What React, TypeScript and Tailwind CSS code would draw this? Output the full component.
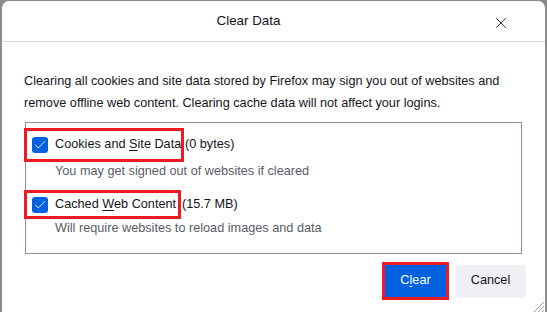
import { Check, X } from "lucide-react";

const font = { fontFamily: '"Segoe UI", "Liberation Sans", Arial, sans-serif' };

function Checkbox() {
  return (
    <span className="w-4 h-4 rounded-[3px] bg-[#0061e0] flex items-center justify-center shrink-0">
      <Check size={14} strokeWidth={1.5} className="text-white" />
    </span>
  );
}

function Option({
  before,
  access,
  after,
  size,
  hint,
  boxClass,
}: {
  before: string;
  access: string;
  after: string;
  size: string;
  hint: string;
  boxClass: string;
}) {
  return (
    <div>
      <div className="flex items-center">
        {/* red annotation box round the checkbox + label */}
        <div className={"-ml-[2px] border-[3px] border-[#ed1c24] flex items-center pl-[5px] " + boxClass}>
          <Checkbox />
          <span className="ml-[7px] text-[#15141a] whitespace-nowrap">
            {before}
            <span className="underline underline-offset-2">{access}</span>
            {after}
          </span>
        </div>
        <span className="ml-[1px] text-[#15141a] whitespace-nowrap">{size}</span>
      </div>
      <div className="pl-[29px] text-[#5b5b66] leading-[18px] whitespace-nowrap">{hint}</div>
    </div>
  );
}

export default function App() {
  return (
    <div className="w-[547px] h-[312px] bg-[#8c8c8c] overflow-hidden" style={font}>
      <div className="h-full mt-px ml-[2px] mr-[2px] bg-white rounded-t-[7px] flex flex-col relative text-[12.7px]">
        {/* header */}
        <div className="h-[41px] border-b border-[#d7d7db] flex items-center justify-center pr-[50px] relative shrink-0">
          <span className="text-[13.4px] text-[#15141a]">Clear Data</span>
          <button className="absolute right-[35px] top-[13px] text-[#15141a]">
            <X size={18} strokeWidth={1.2} />
          </button>
        </div>

        {/* body */}
        <div className="flex-1 flex flex-col pl-[22px] pr-[19px]">
          <p className="mt-[28px] leading-[22px] text-[#15141a]">
            Clearing all cookies and site data stored by Firefox may sign you out of websites and remove
            offline web content. Clearing cache data will not affect your logins.
          </p>

          <div className="mt-[8px] ml-[1px] w-[497px] h-[132px] border border-[#8f8f9d] pt-[5px]">
            <Option
              before="Cookies and "
              access="S"
              after="ite Data"
              size="(0 bytes)"
              hint="You may get signed out of websites if cleared"
              boxClass="h-[34px] w-[160px]"
            />
            <div className="mt-[10px]">
              <Option
                before="Cached "
                access="W"
                after="eb Content"
                size="(15.7 MB)"
                hint="Will require websites to reload images and data"
                boxClass="h-[29px] w-[157px]"
              />
            </div>
          </div>

          {/* buttons */}
          <div className="mt-[8px] flex justify-end items-center gap-[6px]">
            <div className="border-[3px] border-[#ed1c24] w-[67px] h-[38px]">
              <button className="w-full h-full bg-[#0061e0] text-white">
                C<span className="underline underline-offset-2">l</span>ear
              </button>
            </div>
            <button className="w-[71px] h-[33px] rounded-[4px] bg-[#f0f0f4] text-[#15141a]">Cancel</button>
          </div>
        </div>

        {/* resize grip */}
        <svg className="absolute right-0 bottom-0" width="14" height="14" viewBox="0 0 14 14">
          <path d="M13 3 L3 13 M13 7 L7 13 M13 11 L11 13" stroke="#9a9a9a" strokeWidth="1" />
        </svg>
      </div>
    </div>
  );
}
